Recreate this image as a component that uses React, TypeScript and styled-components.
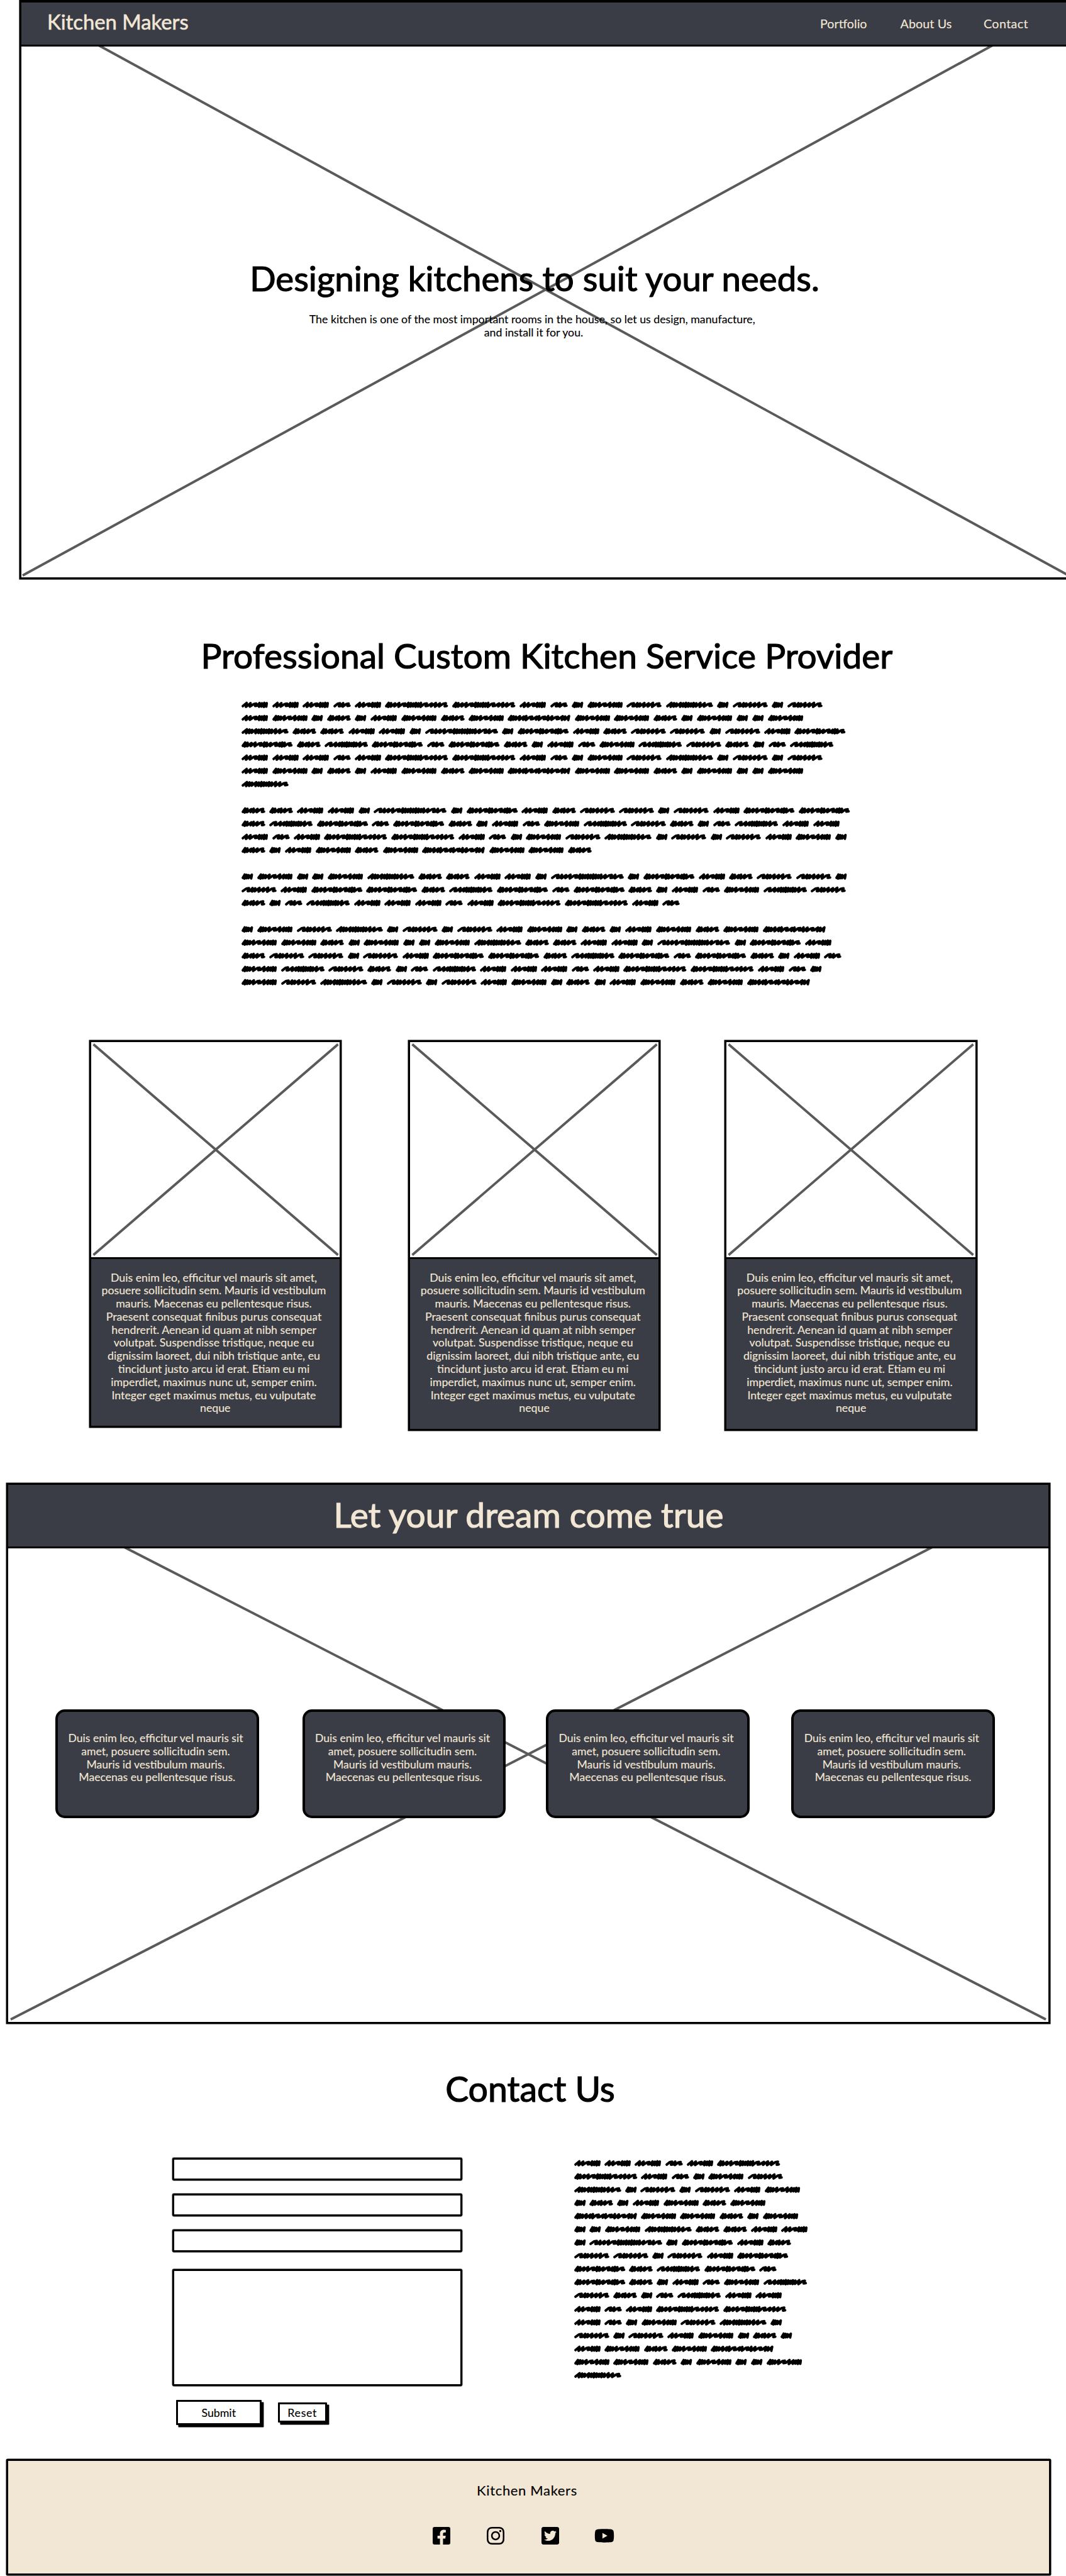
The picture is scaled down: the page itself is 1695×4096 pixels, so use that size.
import React from "react";
import styled, { createGlobalStyle } from "styled-components";
import { FaFacebookSquare, FaInstagram, FaTwitterSquare, FaYoutube } from "react-icons/fa";

const INK = "#000";
const SLATE = "#3a3d46";
const CREAM = "#f2e6d4";
const CROSS = "#5a5a5a";

const GlobalStyle = createGlobalStyle`
  * { box-sizing: border-box; margin: 0; padding: 0; }
  body { background: #fff; overflow: hidden; }
`;

const Page = styled.main`
  width: 1695px;
  height: 4096px;
  overflow: hidden;
  background: #fff;
  color: ${INK};
  font-family: Lato, "Liberation Sans", sans-serif;
  font-size: 17.75px;
  line-height: 20.8px;
  -webkit-text-stroke: 0.15px currentColor;
`;

/* ---------- crossed image placeholder ---------- */

const CrossSvg = styled.svg`
  position: absolute;
  left: 0;
  top: 0;
`;

type CrossProps = { w: number; h: number; inset?: number; top?: number; stroke?: number };

function Cross({ w, h, inset = 5, top = inset, stroke = 3.9 }: CrossProps) {
  return (
    <CrossSvg width={w} height={h} stroke={CROSS} strokeWidth={stroke}>
      <line x1={inset} y1={top} x2={w - inset} y2={h - inset} />
      <line x1={w - inset} y1={top} x2={inset} y2={h - inset} />
    </CrossSvg>
  );
}

/* ---------- scribbled filler copy ---------- */

type Word = { w: number; strokes: string };

/* i = tight stroke, n = open stroke, z = long flat wave */
const WORDS: Record<string, Word> = {
  A: { w: 42.3, strokes: "nnziiii" },
  B: { w: 100.5, strokes: "iinnziiiiiiznnnz" },
  C: { w: 27.8, strokes: "ziz" },
  D: { w: 56.4, strokes: "iiinznniii" },
  E: { w: 18.6, strokes: "iiin" },
  F: { w: 37.9, strokes: "iininz" },
  G: { w: 74.9, strokes: "niiniiiiiinnz" },
  H: { w: 116, strokes: "zinnziiiiiiiiinziz" },
  I: { w: 81.4, strokes: "iinnziinziiiz" },
  J: { w: 69.2, strokes: "znniiiiiiinz" },
  K: { w: 55.9, strokes: "ziinnnz" },
  L: { w: 100, strokes: "iiinniznizinznin" },
};

const ADVANCE: Record<string, number> = { i: 3.3, n: 5.4, z: 9 };

function scribblePath({ w, strokes }: Word): string {
  const pen = 2.1;
  const total = strokes.split("").reduce((sum, s) => sum + ADVANCE[s], 0);
  const k = (w - pen * 2) / total;
  let x = pen;
  let d = `M${x.toFixed(1)} 12.8`;
  strokes.split("").forEach((s, i) => {
    const a = ADVANCE[s] * k;
    const wob = ((i * 7) % 5) * 0.3;
    if (s === "z") {
      d += ` L${(x + a * 0.5).toFixed(1)} ${(8.9 + wob * 0.4).toFixed(1)}`;
      d += ` L${(x + a * 0.86).toFixed(1)} ${(8.2 + wob * 0.4).toFixed(1)}`;
      d += ` L${(x + a * 0.68).toFixed(1)} ${(12.9 - wob * 0.3).toFixed(1)}`;
      d += ` L${(x + a).toFixed(1)} ${(12.4 - wob * 0.3).toFixed(1)}`;
    } else {
      d += ` L${(x + a * 0.98).toFixed(1)} ${(7.7 + wob * 0.7).toFixed(1)}`;
      d += ` L${(x + a * 0.78).toFixed(1)} ${(13.9 - wob * 0.6).toFixed(1)}`;
    }
    x += a;
  });
  return d;
}

const ScribbleBlock = styled.div`
  display: flex;
  flex-direction: column;
`;

const ScribbleRow = styled.div<{ $gap: number }>`
  display: flex;
  gap: ${(p) => p.$gap}px;
  height: 21.05px;
  flex: none;
`;

const ScribbleWord = styled.svg`
  display: block;
  flex: none;
  overflow: visible;
`;

function Scribble({ rows, gap }: { rows: string[]; gap: number }) {
  return (
    <ScribbleBlock>
      {rows.map((row, r) => (
        <ScribbleRow key={r} $gap={gap}>
          {row.split("").map((c, i) => (
            <ScribbleWord key={i} width={WORDS[c].w} height={21}>
              <path
                d={scribblePath(WORDS[c])}
                fill="none"
                stroke={INK}
                strokeWidth={4}
                strokeLinecap="round"
                strokeLinejoin="round"
              />
            </ScribbleWord>
          ))}
        </ScribbleRow>
      ))}
    </ScribbleBlock>
  );
}

const INTRO_ROWS = [
  "AAACABBACEDKGEKEK",
  "ADEFEADFDLDDFEDEED",
  "GFFAAEHEIAFKKEKAI",
  "IFJICIFEACDJKFECJ",
  "AAACABBACEDKGEKEK",
  "ADEFEADFDLDDFEDEED",
  "G",
  "",
  "FFAAEHEIAFKKEKAII",
  "FJICIFEACDJKFECJAA",
  "ACABBACEDKGEKEKADE",
  "FEADFDLDDF",
  "",
  "EDEEDGFFAAEHEIAFKKE",
  "KAIIFJICIFEACDJK",
  "FECJAAACABBAC",
  "",
  "EDKGEKEKADEFEADFDL",
  "DDFEDEEDGFFAAEHEIA",
  "FKKEKAIIFJICIFEAC",
  "DJKFECJAAACABBACE",
  "DKGEKEKADEFEADFDL",
];

const CONTACT_ROWS = [
  "AAACAB",
  "BACEDK",
  "GEKEKAD",
  "EFEADFD",
  "LDDFED",
  "EEDGFFAA",
  "EHEIAF",
  "KKEKAI",
  "IFJIC",
  "IFEACDJ",
  "KFECJAA",
  "ACABB",
  "ACEDKGE",
  "KEKADEFE",
  "ADFDL",
  "DDFEDEED",
  "G",
];

/* ---------- shared text ---------- */

const Heading = styled.h2<{ $size?: number }>`
  font-size: ${(p) => p.$size ?? 55}px;
  line-height: 60px;
  font-weight: 400;
  text-align: center;
  white-space: nowrap;
  -webkit-text-stroke: 1.2px currentColor;
`;

const Copy = styled.p`
  white-space: pre;
  text-align: center;
`;

/* ---------- hero ---------- */

const Hero = styled.section`
  position: relative;
  width: 1673px;
  height: 920.5px;
  margin: 0 0 0.5px 31px;
  border: 3px solid ${INK};
  border-top: none;
  box-shadow: 0 0 0 0.6px ${INK};
`;

const HeroCross = styled.div`
  position: absolute;
  left: -3px;
  top: 1px;
`;

const NavBar = styled.header`
  position: relative;
  display: flex;
  align-items: center;
  justify-content: space-between;
  height: 74px;
  padding: 0 65px 0 41px;
  background: ${SLATE};
  color: ${CREAM};
  border-top: 4px solid ${INK};
  border-bottom: 3px solid ${INK};
`;

const Logo = styled.div`
  font-size: 32.8px;
  line-height: 40px;
  padding-bottom: 6px;
  -webkit-text-stroke: 0.6px currentColor;
`;

const Nav = styled.nav`
  display: flex;
  font-size: 19.7px;
  line-height: 24px;
`;

const NavLink = styled.a<{ $w: number; $track?: number }>`
  width: ${(p) => p.$w}px;
  letter-spacing: ${(p) => p.$track ?? 0}px;
`;

const HeroBody = styled.div`
  position: relative;
  width: 1640px;
  padding-top: 338px;
  margin-left: -4px;
`;

const HeroCopy = styled(Copy)`
  padding: 25px 3px 0 0;
`;

/* ---------- intro ---------- */

const Intro = styled.section`
  height: 733px;
  padding: 91px 0 0 44px;
`;

const IntroCopy = styled.div`
  padding: 37.5px 0 0 340px;
`;

/* ---------- cards ---------- */

const Cards = styled.section`
  display: flex;
  align-items: flex-start;
  height: 704px;
  padding-left: 141.5px;
`;

const Card = styled.article<{ $h: number; $ml?: number }>`
  width: 401.5px;
  height: ${(p) => p.$h}px;
  margin-left: ${(p) => p.$ml ?? 0}px;
  flex: none;
  background: ${SLATE};
  color: ${CREAM};
  border: 3px solid ${INK};
  box-shadow: 0 0 0 0.5px ${INK};
`;

const CardImage = styled.div`
  position: relative;
  height: 345px;
  background: #fff;
  border-bottom: 3px solid ${INK};
`;

const CardCopy = styled(Copy)`
  padding-top: 18.5px;
`;

const CARD_TEXT = [
  "Duis enim leo, efficitur vel mauris sit amet, ",
  "posuere sollicitudin sem. Mauris id vestibulum ",
  "mauris. Maecenas eu pellentesque risus. ",
  "Praesent consequat finibus purus consequat ",
  "hendrerit. Aenean id quam at nibh semper ",
  "volutpat. Suspendisse tristique, neque eu ",
  "dignissim laoreet, dui nibh tristique ante, eu ",
  "tincidunt justo arcu id erat. Etiam eu mi ",
  "imperdiet, maximus nunc ut, semper enim. ",
  "Integer eget maximus metus, eu vulputate ",
  "neque",
].join("\n");

/* ---------- dream banner ---------- */

const Dream = styled.section`
  position: relative;
  width: 1660px;
  height: 860px;
  margin-left: 10px;
  border: 3px solid ${INK};
  box-shadow: 0 0 0 0.5px ${INK};
`;

const DreamHead = styled.div`
  position: relative;
  height: 100.5px;
  padding: 16.5px 0 0 1px;
  background: ${SLATE};
  color: ${CREAM};
  border-bottom: 3px solid ${INK};
`;

const Bubbles = styled.div`
  position: relative;
  display: flex;
  padding: 256px 0 0 75px;
`;

const Bubble = styled.div<{ $ml?: number }>`
  width: 323.5px;
  height: 173px;
  margin-left: ${(p) => p.$ml ?? 0}px;
  padding-top: 32.5px;
  flex: none;
  background: ${SLATE};
  color: ${CREAM};
  border: 4px solid ${INK};
  border-radius: 15px;
  font-size: 17.6px;
`;

const BUBBLE_TEXT = [
  "Duis enim leo, efficitur vel mauris sit ",
  "amet, posuere sollicitudin sem. ",
  "Mauris id vestibulum mauris. ",
  "Maecenas eu pellentesque risus.",
].join("\n");

/* ---------- contact ---------- */

const Contact = styled.section`
  height: 691.5px;
  padding-top: 73px;
`;

const ContactTitle = styled(Heading)`
  width: 1686px;
`;

const ContactColumns = styled.div`
  display: flex;
  padding: 80px 0 0 273.5px;
`;

const Form = styled.form`
  width: 461px;
  flex: none;
`;

const Field = styled.div`
  height: 35.5px;
  margin-bottom: 21.7px;
  border: 3px solid ${INK};
  border-radius: 2px;
  box-shadow: 0 0 0 0.4px ${INK};
`;

const TextArea = styled(Field)`
  height: 186px;
  margin: 27px 0 0;
`;

const Buttons = styled.div`
  display: flex;
  align-items: center;
  padding: 22.5px 0 0 6px;
  gap: 25.5px;
`;

const Button = styled.button<{ $w: number; $h: number; $track?: number }>`
  width: ${(p) => p.$w}px;
  height: ${(p) => p.$h}px;
  background: #fff;
  color: ${INK};
  border: 3px solid ${INK};
  border-radius: 1px;
  box-shadow: 3.4px 3.4px 0 ${INK};
  font: inherit;
  letter-spacing: ${(p) => p.$track ?? 0}px;
  -webkit-text-stroke: inherit;
`;

const ContactCopy = styled.div`
  padding-left: 178px;
  margin-top: -2px;
`;

/* ---------- footer ---------- */

const Footer = styled.footer`
  width: 1661px;
  height: 185.5px;
  margin-left: 10px;
  display: flex;
  flex-direction: column;
  align-items: center;
  background: ${CREAM};
  border: 3px solid ${INK};
  border-radius: 2px;
  box-shadow: 0 0 0 0.5px ${INK};
`;

const FooterName = styled.div`
  padding: 33px 5px 0 0;
  font-size: 22px;
  line-height: 28px;
  letter-spacing: 0.65px;
`;

const Social = styled.div`
  display: flex;
  gap: 54.6px;
  padding: 42.5px 18px 0 0;
  font-size: 32px;
  line-height: 0;
  -webkit-text-stroke: 0;
`;

export default function App() {
  return (
    <Page>
      <GlobalStyle />
      <Hero>
        <HeroCross>
          <Cross w={1673} h={919} />
        </HeroCross>
        <NavBar>
          <Logo>Kitchen Makers</Logo>
          <Nav>
            <NavLink $w={127.5}>Portfolio</NavLink>
            <NavLink $w={132.5} $track={0.1}>About Us</NavLink>
            <NavLink $w={72} $track={0.4}>Contact</NavLink>
          </Nav>
        </NavBar>
        <HeroBody>
          <Heading as="h1" $size={54.6}>Designing kitchens to suit your needs.</Heading>
          <HeroCopy>
            {"The kitchen is one of the most important rooms in the house, so let us design, manufacture, \nand install it for you."}
          </HeroCopy>
        </HeroBody>
      </Hero>

      <Intro>
        <Heading>Professional Custom Kitchen Service Provider</Heading>
        <IntroCopy>
          <Scribble rows={INTRO_ROWS} gap={6.3} />
        </IntroCopy>
      </Intro>

      <Cards>
        {[{ h: 616 }, { h: 621, ml: 105.8 }, { h: 621, ml: 102.1 }].map((c, i) => (
          <Card key={i} $h={c.h} $ml={c.ml}>
            <CardImage>
              <Cross w={396} h={342} inset={3.5} stroke={3.9} />
            </CardImage>
            <CardCopy>{CARD_TEXT}</CardCopy>
          </Card>
        ))}
      </Cards>

      <Dream>
        <Cross w={1654} h={854} inset={4} top={6.5} />
        <DreamHead>
          <Heading>Let your dream come true</Heading>
        </DreamHead>
        <Bubbles>
          {[0, 69, 64, 66.8].map((ml, i) => (
            <Bubble key={i} $ml={ml}>
              <Copy>{BUBBLE_TEXT}</Copy>
            </Bubble>
          ))}
        </Bubbles>
      </Dream>

      <Contact>
        <ContactTitle $size={55.4}>Contact Us</ContactTitle>
        <ContactColumns>
          <Form>
            <Field />
            <Field />
            <Field />
            <TextArea />
            <Buttons>
              <Button type="button" $w={136.5} $h={39.5}>Submit</Button>
              <Button type="button" $w={78.5} $h={32} $track={0.7}>Reset</Button>
            </Buttons>
          </Form>
          <ContactCopy>
            <Scribble rows={CONTACT_ROWS} gap={6.2} />
          </ContactCopy>
        </ContactColumns>
      </Contact>

      <Footer>
        <FooterName>Kitchen Makers</FooterName>
        <Social>
          <FaFacebookSquare />
          <FaInstagram />
          <FaTwitterSquare />
          <FaYoutube />
        </Social>
      </Footer>
    </Page>
  );
}
